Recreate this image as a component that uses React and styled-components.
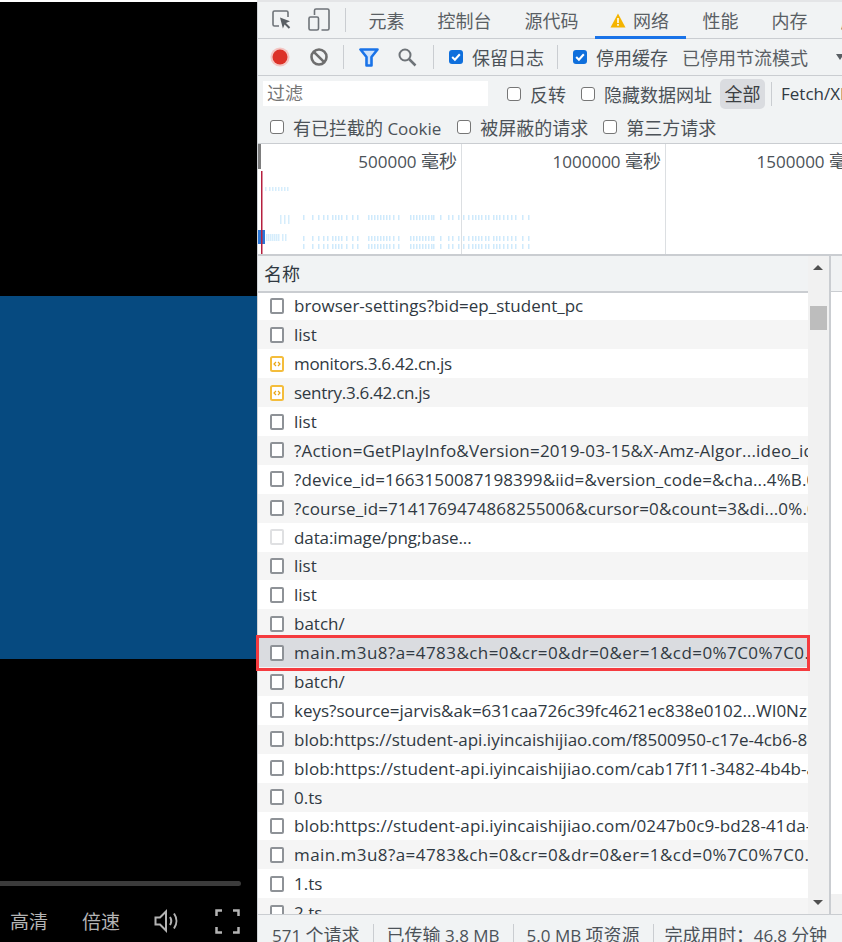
import React from "react";
import styled, { createGlobalStyle } from "styled-components";

const GlobalStyle = createGlobalStyle`
  html, body {
    margin: 0;
    height: 100%;
    overflow: hidden;
    background: #fff;
  }
  body {
    font-family: "Open Sans", "Noto Sans CJK SC", sans-serif;
    font-size: 17px;
    color: #303942;
  }
`;

const rows = [
  { name: "browser-settings?bid=ep_student_pc" },
  { name: "list" },
  { name: "monitors.3.6.42.cn.js", type: "js", spacing: -0.3 },
  { name: "sentry.3.6.42.cn.js", type: "js", spacing: -0.3 },
  { name: "list" },
  { name: "?Action=GetPlayInfo&Version=2019-03-15&X-Amz-Algor...ideo_id=v02", spacing: 0.2 },
  { name: "?device_id=1663150087198399&iid=&version_code=&cha...4%B.0%B0%B0", spacing: 0.13 },
  { name: "?course_id=7141769474868255006&cursor=0&count=3&di...0%.0%B0%B0", spacing: 0.13 },
  { name: "data:image/png;base...", type: "image", spacing: -0.1 },
  { name: "list" },
  { name: "list" },
  { name: "batch/" },
  { name: "main.m3u8?a=4783&ch=0&cr=0&dr=0&er=1&cd=0%7C0%7C0.0%7C0", selected: true, spacing: 0.44 },
  { name: "batch/" },
  { name: "keys?source=jarvis&ak=631caa726c39fc4621ec838e0102...WI0Nzk3MDA" },
  { name: "blob:https://student-api.iyincaishijiao.com/f8500950-c17e-4cb6-8e0f" },
  { name: "blob:https://student-api.iyincaishijiao.com/cab17f11-3482-4b4b-a2b1", spacing: 0.1 },
  { name: "0.ts" },
  { name: "blob:https://student-api.iyincaishijiao.com/0247b0c9-bd28-41da-9e1c", spacing: 0.1 },
  { name: "main.m3u8?a=4783&ch=0&cr=0&dr=0&er=1&cd=0%7C0%7C0.0%7C0", spacing: 0.44 },
  { name: "1.ts" },
  { name: "2.ts" },
];

// tick positions of the network overview, relative to the panel
const ticks = [
  45, 54, 60, 65, 69, 74, 77, 80, 83, 88, 94, 99, 110, 113, 116, 119, 122, 125, 128, 131, 135, 140,
  152, 155, 158, 161, 164, 167, 170, 173, 175, 182, 190, 194, 200, 205, 210, 214, 217, 220, 223,
  227, 230, 235, 238, 241, 245, 249, 253, 257, 264, 270,
];

const Page = styled.div`
  display: grid;
  grid-template-columns: 257px minmax(0, 1fr);
  grid-template-rows: minmax(0, 1fr);
  width: 842px;
  height: 942px;
  padding-top: 2px;
  box-sizing: border-box;
  overflow: hidden;
`;

const Video = styled.div`
  display: flex;
  flex-direction: column;
  min-height: 0;
  background: #000;
`;

const VideoTop = styled.div`
  height: 294px;
  flex: none;
`;

const VideoFrame = styled.div`
  height: 363px;
  flex: none;
  background: #064a80;
`;

const VideoBottom = styled.div`
  flex: 1;
  min-height: 0;
  display: flex;
  flex-direction: column;
  justify-content: flex-end;
`;

const Progress = styled.div`
  width: 241px;
  height: 5px;
  border-radius: 0 3px 3px 0;
  background: #3b3b3b;
`;

const Controls = styled.div`
  display: flex;
  align-items: center;
  height: 56px;
  box-sizing: border-box;
  padding: 14px 0 0 10px;
  color: #b4b4b4;
  font-size: 19px;
`;

const ControlLabel = styled.span`
  width: 72px;
`;

const ControlIcon = styled.svg`
  display: block;
  margin-right: ${(p) => p.$gap || 0}px;
`;

const Devtools = styled.div`
  display: flex;
  flex-direction: column;
  min-width: 0;
  min-height: 0;
  border-left: 1px solid #d0d3d7;
  background: #f1f3f4;
  box-shadow: 0 -2px 0 #e4e5e7;
`;

const TabBar = styled.div`
  display: flex;
  align-items: stretch;
  height: 36px;
  flex: none;
  border-bottom: 1px solid #cacdd1;
`;

const ToolIcons = styled.div`
  display: flex;
  align-items: center;
  gap: 15px;
  padding-left: 13px;
`;

const Sep = styled.div`
  width: 1px;
  height: ${(p) => p.$h || 24}px;
  background: #cacdd1;
  margin: 0 ${(p) => p.$right ?? 10}px 0 ${(p) => p.$left ?? 10}px;
  flex: none;
  align-self: center;
`;

const Tab = styled.div`
  display: flex;
  align-items: center;
  gap: 7px;
  flex: none;
  padding: 2px ${(p) => (p.$active ? "17px" : "16.5px")} 0 ${(p) => (p.$active ? "15px" : "16.5px")};
  font-size: 18px;
  color: #5a5f64;
  border-bottom: 3px solid ${(p) => (p.$active ? "#1a73e8" : "transparent")};
  margin-bottom: -1px;
  height: 37px;
  box-sizing: border-box;
`;

const Toolbar = styled.div`
  display: flex;
  align-items: center;
  height: 36px;
  flex: none;
  padding-left: 12px;
  border-bottom: 1px solid #cacdd1;
  white-space: nowrap;
`;

const IconSlot = styled.div`
  width: 20px;
  display: flex;
  justify-content: center;
  margin-right: ${(p) => p.$gap || 0}px;
  flex: none;
`;

const Check = styled.div`
  width: 14px;
  height: 14px;
  flex: none;
  box-sizing: border-box;
  border-radius: 3px;
  border: ${(p) => (p.$checked ? "none" : "1.5px solid #767676")};
  background: ${(p) => (p.$checked ? "#0f6fdc" : "#fff")};
  display: flex;
  align-items: center;
  justify-content: center;
`;

const Option = styled.label`
  display: flex;
  align-items: center;
  gap: 9px;
  margin-right: ${(p) => p.$right || 0}px;
  color: #4c5258;
  flex: none;
`;

const Zh = styled.span`
  font-size: 18px;
`;

const ThrottleMenu = styled.span`
  color: #5a5f64;
  font-size: 18px;
  margin-left: 14px;
`;

const MenuArrow = styled.div`
  width: 0;
  height: 0;
  border-left: 4px solid transparent;
  border-right: 4px solid transparent;
  border-top: 6px solid #5a5f64;
  margin-left: 28px;
  flex: none;
`;

const FilterBar = styled.div`
  flex: none;
  display: flex;
  flex-direction: column;
  height: 67px;
  border-bottom: 1px solid #cacdd1;
  white-space: nowrap;
`;

const FilterRow = styled.div`
  display: flex;
  align-items: center;
  height: ${(p) => p.$h}px;
  padding-left: ${(p) => p.$pad || 0}px;
  flex: none;
`;

const FilterInput = styled.div`
  width: 225px;
  height: 25px;
  line-height: 25px;
  margin-right: 19px;
  background: #fff;
  color: #757575;
  font-size: 18px;
  padding-left: 4px;
  box-sizing: border-box;
  flex: none;
`;

const Pill = styled.div`
  height: 30px;
  line-height: 30px;
  width: 45px;
  text-align: center;
  background: #dadce0;
  border-radius: 5px;
  font-size: 18px;
  color: #3c4043;
  flex: none;
`;

const Overview = styled.div`
  position: relative;
  height: 110px;
  flex: none;
  background: #fff;
  display: grid;
  grid-template-columns: repeat(3, 204px);
  overflow: hidden;
`;

const Ruler = styled.div`
  border-right: 1px solid #dcdfe2;
  text-align: right;
  padding: 3px 4px 0 0;
  color: #4c5258;
  white-space: nowrap;
`;

const OverviewChart = styled.svg`
  position: absolute;
  left: 0;
  top: 0;
`;

const Waterfall = styled.div`
  flex: 1;
  min-height: 0;
  display: grid;
  grid-template-columns: 573px minmax(0, 1fr);
  grid-template-rows: minmax(0, 1fr);
  border-top: 2px solid #cacdd1;
`;

const ListPane = styled.div`
  display: grid;
  grid-template-columns: minmax(0, 1fr) 21px;
  grid-template-rows: minmax(0, 1fr);
  border-right: 2px solid #cacdd1;
  background: #f1f1f1;
  min-height: 0;
`;

const ListColumn = styled.div`
  display: flex;
  flex-direction: column;
  min-width: 0;
  min-height: 0;
`;

const HeaderCell = styled.div`
  position: relative;
  z-index: 3;
  height: 34px;
  line-height: 34px;
  padding-top: 1px;
  flex: none;
  padding-left: 6px;
  background: #f1f3f4;
  border-bottom: 2px solid #cacdd1;
  color: #303942;
  font-size: 18px;
`;

const RowList = styled.div`
  flex: 1;
  min-height: 0;
  margin-top: -1.5px;
  background: #fff;
  overflow-x: visible;
  overflow-y: clip;
`;

const Row = styled.div`
  position: relative;
  display: flex;
  align-items: center;
  gap: 10px;
  height: 28.9px;
  padding-left: 12px;
  background: ${(p) => (p.$selected ? "#dadce0" : p.$odd ? "#f5f5f5" : "#fff")};
  white-space: nowrap;
  color: #303942;

  ${(p) =>
    p.$selected &&
    `&::after {
      content: "";
      position: absolute;
      z-index: 2;
      left: -2px;
      right: -2px;
      top: -3.5px;
      bottom: -3.5px;
      border: 3px solid #f53b3f;
      box-sizing: border-box;
    }`}
`;

const RowName = styled.span`
  overflow: hidden;
  min-width: 0;
  letter-spacing: ${(p) => p.$spacing || 0}px;
`;

const DocIcon = styled.div`
  width: 14px;
  height: 16px;
  flex: none;
  box-sizing: border-box;
  border-radius: 2px;
  background: #fff;
  border: 2px solid ${(p) => (p.$light ? "#dfe0e2" : "#8e9297")};
`;

const ScrollTrack = styled.div`
  position: relative;
  background: #f1f1f1;
`;

const ArrowUp = styled.div`
  position: absolute;
  left: 5px;
  top: 9px;
  border-left: 5px solid transparent;
  border-right: 5px solid transparent;
  border-bottom: 5px solid #505050;
`;

const ArrowDown = styled.div`
  position: absolute;
  left: 5px;
  bottom: 9px;
  border-left: 5px solid transparent;
  border-right: 5px solid transparent;
  border-top: 5px solid #505050;
`;

const Thumb = styled.div`
  position: absolute;
  left: 2px;
  right: 2px;
  top: 50px;
  height: 24px;
  background: #bdbdbd;
`;

const SidePane = styled.div`
  display: flex;
  flex-direction: column;
  background: #fff;
`;

const SideHeader = styled.div`
  height: 35px;
  background: #f1f3f4;
  border-bottom: 1px solid #cacdd1;
  flex: none;
`;

const SideFill = styled.div`
  flex: 1;
`;

const SideScroll = styled.div`
  height: 20px;
  background: #f1f1f1;
  flex: none;
`;

const StatusBar = styled.div`
  height: 28px;
  box-sizing: border-box;
  flex: none;
  display: flex;
  align-items: center;
  padding: 10px 0 0 14px;
  border-top: 1px solid #cacdd1;
  color: #4c5258;
  white-space: nowrap;
  background: #f1f3f4;
`;

const TotalTime = styled.span`
  letter-spacing: -0.15px;
`;

const Mixed = ({ text }) =>
  text.split(/([\u3000-\u9fff\uff00-\uffef]+)/).map((part, i) =>
    i % 2 ? <Zh key={i}>{part}</Zh> : part
  );

const CheckBox = ({ checked }) => (
  <Check $checked={checked}>
    {checked && (
      <svg width="12" height="12" viewBox="0 0 11 11">
        <path d="M2 5.6 4.500 8 9 3" fill="none" stroke="#fff" strokeWidth="1.900" />
      </svg>
    )}
  </Check>
);

const FileIcon = ({ type }) => {
  if (type === "js") {
    return (
      <svg width="14" height="16" viewBox="0 0 14 16" fill="none" style={{ flex: "none" }}>
        <rect x="1" y="1" width="12" height="14" rx="1.500" fill="#fff" stroke="#f4bd3c" strokeWidth="2" />
        <path d="M6 6 4 8l2 2M8 6l2 2-2 2" stroke="#e8a613" strokeWidth="1.200" />
      </svg>
    );
  }
  return <DocIcon $light={type === "image"} />;
};

export default function App() {
  return (
    <Page>
      <GlobalStyle />
      <Video>
        <VideoTop />
        <VideoFrame />
        <VideoBottom>
          <Progress />
          <Controls>
            <ControlLabel>高清</ControlLabel>
            <ControlLabel>倍速</ControlLabel>
            <ControlIcon $gap={36} width="25" height="26" viewBox="0 0 25 26" fill="none" stroke="#b4b4b4" strokeWidth="2">
              <path d="M1.500 9.500h4.500l6-6v19l-6-6H1.500z" />
              <path d="M16 9c1.600 2.500 1.600 5.500 0 8" />
              <path d="M20 5.500c3.200 4.500 3.200 10.500 0 15" />
            </ControlIcon>
            <ControlIcon width="25" height="25" viewBox="0 0 25 25" fill="none" stroke="#b4b4b4" strokeWidth="2.500">
              <path d="M1.500 7V1.500H7M18 1.500h5.500V7M23.500 18v5.500H18M7 23.500H1.500V18" />
            </ControlIcon>
          </Controls>
        </VideoBottom>
      </Video>

      <Devtools>
        <TabBar>
          <ToolIcons>
            <svg width="22" height="22" viewBox="0 0 22 22" fill="none">
              <path d="M8 17H3.500A1.500 1.500 0 0 1 2 15.500v-12A1.500 1.500 0 0 1 3.500 2h12A1.500 1.500 0 0 1 17 3.500V8" stroke="#6e7378" strokeWidth="1.600" />
              <path d="M9 8.500l10 3.800-4 1.700 4.200 4.300-1.400 1.400-4.200-4.300-1.700 4z" fill="#5a5f64" />
            </svg>
            <svg width="22" height="24" viewBox="0 0 22 24" fill="none" stroke="#6e7378" strokeWidth="1.600">
              <path d="M6.500 7V2.500A1.500 1.500 0 0 1 8 1h11.500A1.500 1.500 0 0 1 21 2.500v18a1.500 1.500 0 0 1-1.500 1.500h-6" />
              <rect x="1" y="9" width="9.500" height="13" rx="1.500" />
            </svg>
          </ToolIcons>
          <Sep $h={24} $left={15} $right={6} />
          <Tab>元素</Tab>
          <Tab>控制台</Tab>
          <Tab>源代码</Tab>
          <Tab $active>
            <svg width="16" height="15" viewBox="0 0 16 15">
              <path d="M8 .5 15.500 14.500H.5z" fill="#f4b400" />
              <path d="M7.200 5h1.600v5H7.200zM7.200 11h1.600v1.700H7.200z" fill="#fff" />
            </svg>
            网络
          </Tab>
          <Tab>性能</Tab>
          <Tab>内存</Tab>
          <Tab>应用</Tab>
        </TabBar>

        <Toolbar>
          <IconSlot $gap={19}>
            <svg width="24" height="24" viewBox="0 0 24 24">
              <circle cx="12" cy="12" r="11.500" fill="#f3c6c3" />
              <circle cx="12" cy="12" r="9" fill="#dc3127" />
            </svg>
          </IconSlot>
          <IconSlot>
            <svg width="20" height="20" viewBox="0 0 20 20" fill="none" stroke="#6e6e6e" strokeWidth="2.600">
              <circle cx="10" cy="10" r="7.500" />
              <path d="M4.800 4.800l10.400 10.400" />
            </svg>
          </IconSlot>
          <Sep $left={14} $right={15} />
          <IconSlot $gap={18}>
            <svg width="20" height="19" viewBox="0 0 20 19" fill="none">
              <path d="M1.500 1.500h17L12.500 9v8.500h-5V9z" stroke="#1a73e8" strokeWidth="2.600" strokeLinejoin="round" fill="#cfe2fb" />
            </svg>
          </IconSlot>
          <IconSlot>
            <svg width="20" height="20" viewBox="0 0 20 20" fill="none" stroke="#6e7378" strokeWidth="2">
              <circle cx="8" cy="8" r="5.500" />
              <path d="M12 12l6.500 6.500" strokeWidth="2.500" />
            </svg>
          </IconSlot>
          <Sep $left={16} $right={15} />
          <Option>
            <CheckBox checked />
            <Zh>保留日志</Zh>
          </Option>
          <Sep $left={13} $right={15} />
          <Option>
            <CheckBox checked />
            <Zh>停用缓存</Zh>
          </Option>
          <ThrottleMenu>已停用节流模式</ThrottleMenu>
          <MenuArrow />
        </Toolbar>

        <FilterBar>
          <FilterRow $h={35} $pad={5}>
            <FilterInput>过滤</FilterInput>
            <Option $right={15}>
              <CheckBox />
              <Zh>反转</Zh>
            </Option>
            <Option $right={8}>
              <CheckBox />
              <Zh>隐藏数据网址</Zh>
            </Option>
            <Pill>全部</Pill>
            <Sep $h={24} $left={6} $right={9} />
            <span>Fetch/XHR</span>
          </FilterRow>
          <FilterRow $h={32} $pad={12}>
            <Option $right={16}>
              <CheckBox />
              <span>
                <Mixed text="有已拦截的 Cookie" />
              </span>
            </Option>
            <Option $right={15}>
              <CheckBox />
              <Zh>被屏蔽的请求</Zh>
            </Option>
            <Option>
              <CheckBox />
              <Zh>第三方请求</Zh>
            </Option>
          </FilterRow>
        </FilterBar>

        <Overview>
          <Ruler>
            <Mixed text="500000 毫秒" />
          </Ruler>
          <Ruler>
            <Mixed text="1000000 毫秒" />
          </Ruler>
          <Ruler>
            <Mixed text="1500000 毫秒" />
          </Ruler>
          <OverviewChart width="584" height="110" viewBox="0 0 584 110">
            <rect x="0" y="0" width="3" height="25" fill="#7d7d7d" />
            {[7, 11, 14, 17, 20, 23, 26, 29].map((x) => (
              <rect key={x} x={x} y="43" width="1.500" height="4" fill="#d6edfc" />
            ))}
            {ticks.map((x) => (
              <React.Fragment key={x}>
                <rect x={x} y="71" width="1.500" height="5" fill="#cfeafc" />
                <rect x={x} y="92" width="1.500" height="5" fill="#cfeafc" />
                <rect x={x} y="100" width="1.500" height="5" fill="#cfeafc" />
              </React.Fragment>
            ))}
            {[22, 26, 30].map((x) => (
              <rect key={x} x={x} y="71" width="1.500" height="9" fill="#d6edfc" />
            ))}
            {[8, 10, 12, 14, 16, 18, 20, 24, 27].map((x) => (
              <rect key={x} x={x} y="90" width="1.500" height="7" fill="#d6edfc" />
            ))}
            <rect x="0" y="86" width="7" height="14" fill="#2a77d8" />
            <rect x="3" y="27" width="1.500" height="83" fill="#b5203f" />
          </OverviewChart>
        </Overview>

        <Waterfall>
          <ListPane>
            <ListColumn>
              <HeaderCell>名称</HeaderCell>
              <RowList>
                {rows.map((row, i) => (
                  <Row key={i} $odd={i % 2 === 1} $selected={row.selected}>
                    <FileIcon type={row.type} />
                    <RowName $spacing={row.spacing}>{row.name}</RowName>
                  </Row>
                ))}
              </RowList>
            </ListColumn>
            <ScrollTrack>
              <ArrowUp />
              <Thumb />
              <ArrowDown />
            </ScrollTrack>
          </ListPane>
          <SidePane>
            <SideHeader />
            <SideFill />
            <SideScroll />
          </SidePane>
        </Waterfall>

        <StatusBar>
          <span>
            <Mixed text="571 个请求" />
          </span>
          <Sep $h={20} $left={13} $right={13} />
          <span>
            <Mixed text="已传输 3.8 MB" />
          </span>
          <Sep $h={20} $left={13} $right={13} />
          <span>
            <Mixed text="5.0 MB 项资源" />
          </span>
          <Sep $h={20} $left={13} $right={11} />
          <TotalTime>
            <Mixed text="完成用时：46.8 分钟" />
          </TotalTime>
        </StatusBar>
      </Devtools>
    </Page>
  );
}
